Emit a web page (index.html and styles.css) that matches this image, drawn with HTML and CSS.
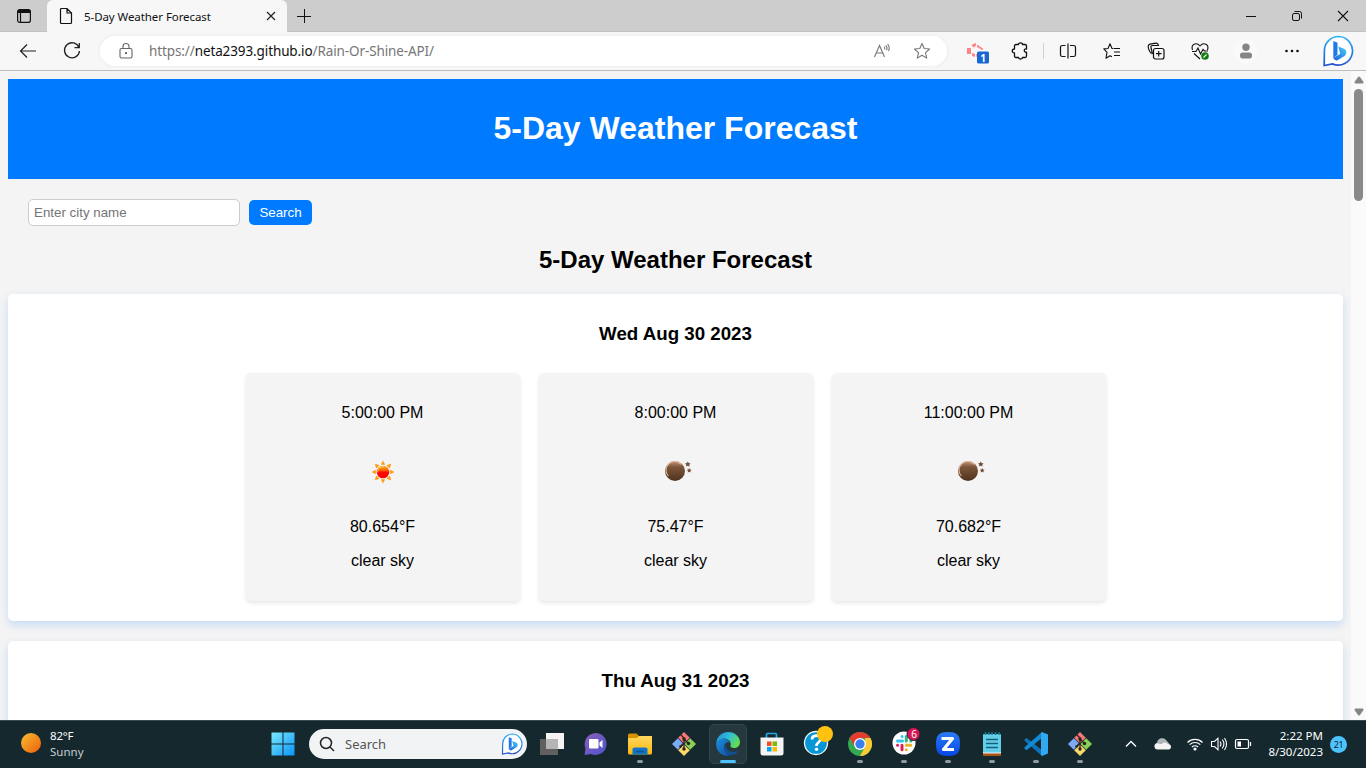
FILE: index.html
```html
<!DOCTYPE html>
<html lang="en">
<head>
<meta charset="utf-8">
<title>5-Day Weather Forecast</title>
<link rel="stylesheet" href="styles.css">
</head>
<body>
<svg class="defs" width="0" height="0" aria-hidden="true">
  <defs>
    <linearGradient id="bing" x1="0" y1="0" x2="0" y2="1"><stop offset="0" stop-color="#2fb4f5"/><stop offset="1" stop-color="#2552d0"/></linearGradient>
    <linearGradient id="bingb" x1="1" y1="0" x2="0" y2="1"><stop offset="0" stop-color="#48d3f5"/><stop offset="1" stop-color="#1b5be0"/></linearGradient>
    <linearGradient id="sunny" x1="0" y1="0" x2="1" y2="1"><stop offset="0" stop-color="#f5c031"/><stop offset="1" stop-color="#ee5d0c"/></linearGradient>
    <linearGradient id="win" x1="0" y1="0" x2="1" y2="1"><stop offset="0" stop-color="#7beafc"/><stop offset="1" stop-color="#0a93f8"/></linearGradient>
    <linearGradient id="redsun" x1="0" y1="0" x2="0" y2="1"><stop offset="0" stop-color="#ffb020"/><stop offset=".4" stop-color="#ff5a00"/><stop offset=".5" stop-color="#ff0800"/><stop offset="1" stop-color="#f00"/></linearGradient>
    <linearGradient id="moon" x1="0" y1="0" x2="0" y2="1"><stop offset="0" stop-color="#c79478"/><stop offset=".3" stop-color="#7d5539"/><stop offset="1" stop-color="#4f3320"/></linearGradient>
    <linearGradient id="folder" x1="0" y1="0" x2="0" y2="1"><stop offset="0" stop-color="#ffd75e"/><stop offset="1" stop-color="#fbb812"/></linearGradient>
    <linearGradient id="chat" x1="0" y1="0" x2="1" y2="1"><stop offset="0" stop-color="#8b5fb8"/><stop offset="1" stop-color="#4b55cf"/></linearGradient>
    <linearGradient id="edgeg" x1="0" y1="0" x2="1" y2=".5"><stop offset="0" stop-color="#1d87d8"/><stop offset=".55" stop-color="#2fc0d8"/><stop offset="1" stop-color="#62dc50"/></linearGradient>
    <linearGradient id="edgeb" x1="0" y1="0" x2="1" y2="1"><stop offset="0" stop-color="#1d8fe0"/><stop offset="1" stop-color="#0c4f9c"/></linearGradient>
    <linearGradient id="zoom" x1="0" y1="0" x2="0" y2="1"><stop offset="0" stop-color="#2b7bf7"/><stop offset="1" stop-color="#0646e8"/></linearGradient>
    <symbol id="bubble" viewBox="0 0 32 32">
      <path d="M16.500 1.500a14.300 14.300 0 1 1-6 27.400L2.200 30.500 2.400 16A14.200 14.200 0 0 1 16.500 1.500Z" fill="#fff" stroke="url(#bing)" stroke-width="1.700"/>
      <path d="M11.300 6l4.200 1.700v12l-4.200 3.500Z" fill="#1f78ec"/>
      <path d="M16.300 11.500l5.700 2.200c3.300 1.500 3 5.500.5 7.200L15.500 25.200q-2.500 1-4.200-2.200l7-4.200-1-3Z" fill="url(#bingb)"/>
    </symbol>
    <symbol id="git" viewBox="0 0 24 24">
      <path d="M12 0l5.800 5.800L12 11.600 6.200 5.800Z" fill="#f47878"/><path d="M5.800 6.200l5.800 5.800-5.800 5.800L0 12Z" fill="#7daaf5"/>
      <path d="M18.200 6.200L24 12l-5.800 5.800-5.800-5.800Z" fill="#89cf58"/><path d="M12 12.400l5.800 5.800L12 24l-5.800-5.800Z" fill="#fad86b"/>
      <path d="M8.500 2.500L12 6v11.500M12 7l5 5M12 11q-2 1-3.500 4" fill="none" stroke="#27221e" stroke-width="1.300"/>
      <circle cx="12" cy="7" r="1.700" fill="#27221e"/><circle cx="16.500" cy="11.500" r="1.700" fill="#27221e"/><circle cx="12" cy="17" r="1.700" fill="#27221e"/><circle cx="8.500" cy="14.500" r="1.300" fill="#27221e"/>
    </symbol>
    <symbol id="night" viewBox="0 0 28 24">
      <circle cx="11" cy="12" r="10" fill="url(#moon)"/>
      <path d="M4.300 17A8.500 8.500 0 0 1 17 5.300" fill="none" stroke="#e2b8a3" stroke-width="1.100"/>
      <path d="M23.800 2.500l.9 1.600 1.900.3-1.300 1.300.3 1.900-1.800-.8-1.800.8.300-1.900L21 4.400l1.900-.3ZM25.200 9l.8 1.500 1.600.3-1.200 1.100.3 1.600-1.500-.7-1.500.7.300-1.600-1.200-1.100 1.600-.3Z" fill="#755039"/>
    </symbol>
  </defs>
</svg>
<div class="desktop">
  <div class="tabstrip">
    <div class="tab-menu"><svg width="16" height="16" viewBox="0 0 16 16"><rect x="1.600" y="1.600" width="12.800" height="12.800" rx="2.200" fill="none" stroke="#111" stroke-width="1.200"/><path d="M1.500 5V4a2.500 2.500 0 0 1 2.500-2.500h8A2.500 2.500 0 0 1 14.500 4v1Z" fill="#111"/><path d="M4.500 5v9" stroke="#111" stroke-width="1.200"/></svg></div>
    <div class="tab">
      <svg width="14" height="18" viewBox="0 0 14 18" fill="none" stroke="#111" stroke-width="1.200"><path d="M1.500 2.500a1 1 0 0 1 1-1H8l4.500 4.500v9.500a1 1 0 0 1-1 1h-9a1 1 0 0 1-1-1ZM8 1.500V6h4.500"/></svg>
      <span class="tab-title">5-Day Weather Forecast</span>
      <svg class="tab-close" width="10" height="10" viewBox="0 0 10 10" stroke="#222" stroke-width="1.200"><path d="M1 1l8 8M9 1l-8 8"/></svg>
    </div>
    <svg class="new-tab" width="14" height="14" viewBox="0 0 14 14" stroke="#111" stroke-width="1"><path d="M7.500 0v14M0 7.500h14"/></svg>
    <div class="win-buttons">
      <svg width="12" height="12" viewBox="0 0 12 12"><path d="M1 6.500h10" stroke="#111"/></svg>
      <svg width="12" height="12" viewBox="0 0 12 12" fill="none" stroke="#111"><rect x="1.500" y="3.500" width="7" height="7" rx="1.500"/><path d="M3.500 1.500h5q2 0 2 2v5"/></svg>
      <svg width="12" height="12" viewBox="0 0 12 12" stroke="#111" stroke-width="1.100"><path d="M1 1l10 10M11 1L1 11"/></svg>
    </div>
  </div>

  <div class="toolbar">
    <div class="slot"><svg width="18" height="16" viewBox="0 0 18 16" fill="none" stroke="#222" stroke-width="1.200"><path d="M17 8H1.500M8 1.500L1.500 8 8 14.500"/></svg></div>
    <div class="slot"><svg width="18" height="18" viewBox="0 0 18 18" fill="none" stroke="#222" stroke-width="1.300"><path d="M16 5.500A7.500 7.500 0 1 0 16.500 9M16.300 1v4.700h-4.800"/></svg></div>
    <div class="address">
      <svg width="14" height="16" viewBox="0 0 14 16" fill="none" stroke="#666" stroke-width="1.100"><rect x="1" y="5.500" width="12" height="9.500" rx="1.500"/><path d="M4 5.500V3.500a3 3 0 0 1 6 0v2"/><circle cx="7" cy="10.200" r=".6" fill="#666"/></svg>
      <span class="url">https://<b>neta2393.github.io</b>/Rain-Or-Shine-API/</span>
      <svg class="read" width="18" height="18" viewBox="0 0 18 18" fill="none" stroke="#777" stroke-width="1.100"><path d="M1.500 15L6.500 3.500l5 11.500M3.200 11h6.600M11 4.500q1.200 1.300.6 3M12.800 3.300q2 2.200.8 5M14.600 2q2.700 3.200.9 7"/></svg>
      <svg width="18" height="18" viewBox="0 0 18 18" fill="none" stroke="#777" stroke-width="1.100" stroke-linejoin="round"><path d="M9 1.500l2.200 5 5.400.5-4.100 3.700 1.200 5.400L9 13.300l-4.700 2.800 1.200-5.400L1.400 7l5.400-.5Z"/></svg>
    </div>
    <div class="slot ext"><svg width="24" height="24" viewBox="0 0 24 24"><path d="M1 9h4v6H1ZM6 7V5.500L10 4v2.500L8 8.500ZM11 5.500l6.500 4.500-1.500 1-5-3ZM6 14l3 1v3l-3-1ZM10 15.500l3-1.500v3l-2.500 1Z" fill="#ff8585"/><rect x="11" y="12.500" width="12" height="12" rx="1.500" fill="#1967d2"/></svg><span class="ext-count">1</span></div>
    <div class="slot puzzle"><svg width="18" height="18" viewBox="0 0 18 18" fill="none" stroke="#111" stroke-width="1.300" stroke-linejoin="round"><path d="M5 2.500h2.500C7.500.3 11.500.3 11.500 2.500H14q1.500 0 1.500 1.500v3c-3-.8-3 3.800 0 3.200V14q0 1.500-1.500 1.500h-2.500c0 2-4 2-4 0H5Q3.500 15.500 3.500 14v-3C.5 11 .5 7 3.500 7V4Q3.500 2.500 5 2.500Z"/></svg></div>
    <div class="divider"></div>
    <div class="slot split"><svg width="18" height="18" viewBox="0 0 18 18" fill="none" stroke="#111" stroke-width="1.200"><path d="M6.500 3.500H3.500Q1.500 3.500 1.500 5v8q0 1.500 2 1.500h3M11 3.500h3.500q2 0 2 1.500v8q0 1.500-2 1.500H11M9 1.500v15"/></svg></div>
    <div class="slot"><svg width="18" height="18" viewBox="0 0 18 18" fill="none" stroke="#111" stroke-width="1.100" stroke-linejoin="round"><path d="M10.500 6.500H9L7 1.800 5 6.500l-4.200.4L4 10.300l-1 5.900 4-2.400 2 1M11 6.500h6M11 10h6M11 13.500h6"/></svg></div>
    <div class="slot"><svg width="18" height="18" viewBox="0 0 18 18" fill="none" stroke="#111" stroke-width="1.200"><path d="M4.500 11.500C1.800 9.500 1 5 1.300 4Q1.600 2.500 3 2.200l6-1q2-.2 2.500 2.300H5.500Q3.500 3.500 4 5.500L5.500 12"/><rect x="6.500" y="6.500" width="10.500" height="10.500" rx="2"/><path d="M11.700 9v5.500M9 11.700h5.500"/></svg></div>
    <div class="slot"><svg width="18" height="18" viewBox="0 0 18 18" fill="none" stroke="#111" stroke-width="1.100"><path d="M1.500 8C-.5 2.500 5.500-.3 9 4c3.500-4.300 9.500-1.500 7.500 4M1 9.500h4L7 6l2.500 6L12 7.500 13.500 9H17M3 11.500l6 5.500"/><circle cx="14" cy="14" r="3.800" fill="#107c10" stroke="none"/><path d="M12.500 15.500l3-3" stroke="#fff"/></svg></div>
    <div class="slot profile"><svg width="24" height="24" viewBox="0 0 24 24"><circle cx="12" cy="12" r="12" fill="#fafafa"/><circle cx="12" cy="8.200" r="3.700" fill="#858585"/><rect x="6" y="13.500" width="12" height="6" rx="2.800" fill="#858585"/></svg></div>
    <div class="slot"><svg width="16" height="4" viewBox="0 0 16 4" fill="#111"><circle cx="2.500" cy="2" r="1.300"/><circle cx="8" cy="2" r="1.300"/><circle cx="13.500" cy="2" r="1.300"/></svg></div>
    <div class="slot bing"><svg width="32" height="32"><use href="#bubble"/></svg></div>
  </div>

  <div class="viewport">
    <div class="page">
      <header class="banner"><h1>5-Day Weather Forecast</h1></header>
      <div class="search-form"><input type="text" placeholder="Enter city name"><button>Search</button></div>
      <h2>5-Day Weather Forecast</h2>
      <section class="day">
        <h3>Wed Aug 30 2023</h3>
        <div class="hours">
          <div class="hour"><p>5:00:00 PM</p>
            <svg class="weather" width="28" height="24" viewBox="0 0 28 24"><path d="M14 .500l2.200 4.300h-4.400ZM14 23.500l2.200-4.300h-4.400ZM2.500 12l4.300-2.200v4.400ZM25.500 12l-4.300-2.200v4.400ZM5.800 3.800l4.800 1.400-3.400 3.400ZM22.200 3.800l-1.400 4.800-3.400-3.400ZM5.800 20.200l1.400-4.800 3.400 3.400ZM22.200 20.200l-4.800-1.400 3.400-3.400Z" fill="#ff9a16"/><circle cx="14" cy="12" r="6.300" fill="url(#redsun)"/><path d="M8.800 12.500A5.200 5.200 0 0 1 15 6.800" fill="none" stroke="#ffd36a" stroke-width=".8"/></svg>
            <p class="temp">80.654°F</p><p class="sky">clear sky</p></div>
          <div class="hour"><p>8:00:00 PM</p>
            <svg class="weather night" width="28" height="24"><use href="#night"/></svg>
            <p class="temp">75.47°F</p><p class="sky">clear sky</p></div>
          <div class="hour"><p>11:00:00 PM</p>
            <svg class="weather night" width="28" height="24"><use href="#night"/></svg>
            <p class="temp">70.682°F</p><p class="sky">clear sky</p></div>
        </div>
      </section>
      <section class="day"><h3>Thu Aug 31 2023</h3></section>
    </div>
    <div class="scrollbar">
      <svg width="10" height="8" viewBox="0 0 10 8"><path d="M4 1Q5 0 6 1L9.500 6Q9.700 7.500 8.500 7.500h-7Q.3 7.500.5 6Z" fill="#858585"/></svg>
      <div class="thumb"></div>
      <svg class="down" width="10" height="8" viewBox="0 0 10 8"><path d="M4 7Q5 8 6 7L9.500 2Q9.700.5 8.500.5h-7Q.3.500.5 2Z" fill="#858585"/></svg>
    </div>
  </div>

  <div class="taskbar">
    <div class="widget"><svg width="20" height="20"><circle cx="10" cy="10" r="10" fill="url(#sunny)"/></svg><div><div class="deg">82°F</div><div class="cond">Sunny</div></div></div>
    <svg class="start" width="24" height="24" viewBox="0 0 24 24" fill="url(#win)"><path d="M.5.500h11v11H.5ZM12.500.500h11v11h-11ZM.5 12.500h11v11H.5ZM12.500 12.500h11v11h-11Z"/></svg>
    <div class="task-search">
      <svg width="16" height="16" viewBox="0 0 16 16" fill="none" stroke="#222" stroke-width="1.500"><circle cx="7" cy="7" r="5.500"/><path d="M11 11l4 4"/></svg>
      <span>Search</span>
      <svg width="22" height="22"><use href="#bubble"/></svg>
    </div>
    <div class="apps">
      <div class="app"><svg width="24" height="24" viewBox="0 0 24 24"><rect x="6" y="1" width="18" height="16" fill="#f4f4f4"/><rect y="7" width="18" height="16" fill="#606060"/><rect x="6" y="7" width="12" height="10" fill="#b5b5b5"/></svg></div>
      <div class="app"><svg width="24" height="24" viewBox="0 0 24 24"><path d="M11.500 1A11 11 0 1 1 7 22L.5 23l1-6.500A11.200 11.200 0 0 1 11.500 1Z" fill="url(#chat)"/><rect x="5" y="7" width="9.500" height="9.500" rx="1" fill="#fff"/><path d="M15.500 10.500l3-2.500v8l-3-2.500Z" fill="#fff"/></svg></div>
      <div class="app run"><svg width="26" height="24" viewBox="0 0 26 24"><path d="M1 3q0-1.500 1.500-1.500h7L12 4v4H1Z" fill="#d99100"/><path d="M1 6h9l2-2h13v17q0 1.500-1.500 1.500h-21Q1 22.500 1 21Z" fill="url(#folder)"/><path d="M5.500 22.500V17q0-1.500 2-1.500h11q2 0 2 1.500v5.500Z" fill="#1374c5"/><path d="M9 19.500h8" stroke="#0a579d" stroke-width="1.500"/></svg></div>
      <div class="app"><svg width="24" height="24"><use href="#git"/></svg></div>
      <div class="app active"><svg width="24" height="24" viewBox="0 0 24 24"><path d="M.3 11C.8 4.500 6 0 12 0c7 0 12 5 12 10 0 4-3 6-6 6-2.500 0-4-1-3.500-2.200C16 10 12 6 7.500 6.500 4 7 1.500 9 .3 11Z" fill="url(#edgeg)"/><path d="M.2 11C2 7.500 5 6.300 8 6.700c3.500.3 5.500 2.500 5.500 4C11 9 8 12 8.200 15.500c.3 4 3.500 7 6.500 8C7 25.500-.5 20 .2 11Z" fill="url(#edgeb)"/><path d="M9 11.500c-2.500 5 1.500 12 8 11.500 2.500-.5 5-2.800 6-4.500-7 3.500-13 .5-14-7Z" fill="#124f92"/></svg></div>
      <div class="app"><svg width="24" height="24" viewBox="0 0 24 24"><path d="M6.500 6V2.500q0-1 1-1h8q1 0 1 1V6" fill="none" stroke="#24a8e8" stroke-width="1.700"/><path d="M.5 5.500h23V21q0 2.500-2.500 2.500H3Q.5 23.500.5 21Z" fill="#f4f4f4"/><path d="M7 9.500h4.500V14H7Z" fill="#f25022"/><path d="M12.500 9.500H17V14h-4.500Z" fill="#7fba00"/><path d="M7 15h4.500v4.500H7Z" fill="#00a4ef"/><path d="M12.500 15H17v4.500h-4.500Z" fill="#ffb900"/></svg></div>
      <div class="app help"><svg width="32" height="32" viewBox="0 0 32 32"><circle cx="14" cy="17" r="11.500" fill="#0796d5" stroke="#e9f6fb" stroke-width="1.300"/><path d="M10 13.500c0-5 8.500-5 8.500-.5 0 3.500-4 3-4 7" fill="none" stroke="#fff" stroke-width="2.700"/><circle cx="14.500" cy="23.300" r="1.700" fill="#fff"/><circle cx="23" cy="8" r="8" fill="#ffc20e"/></svg></div>
      <div class="app run"><svg width="24" height="24" viewBox="0 0 24 24"><circle cx="12" cy="12" r="12" fill="#34a853"/><path d="M1.600 6A12 12 0 0 1 22.400 6H12L7 15Z" fill="#e33b2e"/><path d="M22.400 6A12 12 0 0 1 12 24l5-9 0-9Z" fill="#fcc934"/><circle cx="12" cy="12" r="6" fill="#fff"/><circle cx="12" cy="12" r="4.700" fill="#3a7ff0"/></svg></div>
      <div class="app run slack"><svg width="32" height="32" viewBox="0 0 32 32"><circle cx="15" cy="17" r="11.500" fill="#fff"/><g fill="none" stroke-width="3" stroke-linecap="round"><path d="M8.500 15h5M13 10.500h.1" stroke="#36c5f0"/><path d="M17.300 10.500V15M21.800 15h.1" stroke="#2eb67d"/><path d="M17.300 19.300h4.500M17.300 23.800h.1" stroke="#ecb22e"/><path d="M13 19.300v4.500M8.500 19.300h.1" stroke="#e01e5a"/></g><circle cx="24.500" cy="8" r="6.500" fill="#d91655" stroke="#26222c"/></svg><span class="count">6</span></div>
      <div class="app run"><svg width="24" height="24" viewBox="0 0 24 24"><path d="M12 0c9 0 12 3 12 12s-3 12-12 12S0 21 0 12 3 0 12 0Z" fill="url(#zoom)"/><path d="M5.500 6.500h11L7.500 17.500H18" fill="none" stroke="#fff" stroke-width="3.200" stroke-linejoin="round"/></svg></div>
      <div class="app run"><svg width="20" height="24" viewBox="0 0 20 24"><path d="M1 21h18v3H1Z" fill="#a85418"/><path d="M1 20h18v1.500H1Z" fill="#f5f1e8"/><rect x="1" y="2" width="18" height="18.500" rx="1" fill="#63cee9"/><path d="M3.500 0v3M7 0v3M10 0v3M13.500 0v3M17 0v3" stroke="#167994" stroke-width="1.500"/><path d="M4 7.500h12M4 11.500h12M4 15.500h12" stroke="#13627d" stroke-width="1.500"/></svg></div>
      <div class="app run"><svg width="24" height="24" viewBox="0 0 24 24"><path d="M.5 7.500l2-1.500L18 18v6L.5 8.800Z" fill="#0e72b8"/><path d="M.5 16.500l2 1.700L18 6V0L.5 15.200Z" fill="#118bd4"/><path d="M18 0l6 2.500v19L18 24l-1-1V1Z" fill="#31a8f0"/></svg></div>
      <div class="app run"><svg width="24" height="24"><use href="#git"/></svg></div>
    </div>
    <div class="tray">
      <div class="tray-slot chevron"><svg width="12" height="8" viewBox="0 0 12 8"><path d="M1 6.500l5-5 5 5" fill="none" stroke="#fff" stroke-width="1.300"/></svg></div>
      <div class="tray-slot cloud"><svg width="18" height="12" viewBox="0 0 18 12"><path d="M3 5a5.200 5.200 0 0 1 9.500-2.500l3 3.500Z" fill="#aeb6b9"/><path d="M3.500 11.500a3.300 3.300 0 0 1-.5-6.500l4 .5 4.500-1 3 1.500a2.800 2.800 0 0 1 .5 5.500Z" fill="#f4f4f4"/></svg></div>
      <div class="tray-slot"><svg width="18" height="14" viewBox="0 0 18 14" fill="none" stroke="#fff" stroke-width="1.200"><path d="M1.500 5.500a10.600 10.600 0 0 1 15 0M3.700 7.700a7.500 7.500 0 0 1 10.600 0M6 10a4.200 4.200 0 0 1 6 0"/><circle cx="9" cy="12" r="1" fill="#fff"/></svg></div>
      <div class="tray-slot"><svg width="18" height="16" viewBox="0 0 18 16" fill="none" stroke="#fff" stroke-width="1.100"><path d="M1.500 5.500h3L8 2.200v11.600L4.500 10.500h-3ZM10 5.500q2 2.500 0 5M12.300 3.500q3.200 4.500 0 9M14.500 2q4 6 0 12"/></svg></div>
      <div class="tray-slot"><svg width="18" height="12" viewBox="0 0 18 12" fill="none" stroke="#fff" stroke-width="1.200"><rect x="1.500" y="1.500" width="13" height="9" rx="1.500"/><path d="M16.500 4v4"/><path d="M3.500 3.500h3.500v5H3.500Z" fill="#fff" stroke="none"/></svg></div>
      <div class="clock"><div class="time">2:22 PM</div><div class="date">8/30/2023</div></div>
      <div class="notif">21</div>
    </div>
  </div>
</div>
</body>
</html>
```
FILE: styles.css
```css
* { box-sizing: border-box; }
body { margin: 0; overflow: hidden; font-family: "Noto Sans", sans-serif; }
svg { display: block; flex: none; overflow: visible; }
.defs { position: absolute; }
.desktop { display: flex; flex-direction: column; width: 1366px; height: 768px; overflow: hidden; }

.tabstrip { display: flex; height: 32px; flex: none; background: #cdcdcd; align-items: center; border-bottom: 1px solid #c2c2c2; }
.tab-menu { width: 47px; display: flex; padding-left: 16px; }
.tab { display: flex; align-items: center; align-self: stretch; width: 240px; height: 32px; background: #f7f7f7; border-radius: 6px 6px 0 0; padding: 0 11px 0 12px; }
.tab-title { margin-left: 11px; font-size: 11.5px; letter-spacing: -0.07px; white-space: nowrap; color: #111; }
.tab-close { margin-left: auto; }
.new-tab { margin-left: 10px; }
.win-buttons { margin-left: auto; display: flex; gap: 34px; padding-right: 17px; }

.toolbar { display: flex; align-items: center; height: 39px; flex: none; background: #f7f7f7; border-bottom: 1px solid #bdbdbd; padding-left: 6px; }
.slot { width: 44px; flex: none; display: flex; justify-content: center; }
.address { display: flex; align-items: center; width: 847px; height: 30px; margin: 0 9px 0 6px; border-radius: 15px; background: #fff; box-shadow: 0 0 4px rgba(0, 0, 0, 0.06); padding: 0 16px 0 19px; }
.url { margin-left: 16px; font-size: 13.5px; letter-spacing: -0.11px; color: #767676; white-space: nowrap; }
.url b { font-weight: 400; color: #111; }
.read { margin-left: auto; margin-right: 22px; }
.ext { position: relative; }
.ext-count { position: absolute; left: 21px; top: 13px; width: 12px; line-height: 12px; text-align: center; font-size: 10px; font-weight: 700; color: #fff; }
.puzzle { width: 40px; }
.divider { width: 1px; height: 16px; background: #d0d0d0; margin: 0 3px; }
.split { width: 41px; margin-right: 2px; }
.profile { width: 48px; }
.bing { width: 48px; margin-right: 2px; }

.viewport { display: flex; height: 649px; flex: none; background: #f4f4f4; overflow: hidden; }
.page { width: 1351px; padding: 8px; overflow: hidden; font-family: "Liberation Sans", Arial, sans-serif; color: #000; }
.banner { height: 100px; padding-top: 31px; background: #007bff; color: #fff; text-align: center; }
.banner h1 { margin: 0; font-size: 32px; line-height: 37px; }
.search-form { display: flex; align-items: center; gap: 9px; padding: 20px 20px 0; }
.search-form input { width: 212px; height: 27px; padding: 5px; border: 1px solid #ccc; border-radius: 5px; font: 13.333px "Liberation Sans", Arial, sans-serif; }
.search-form input::placeholder { color: #757575; }
.search-form button { width: 63px; height: 25px; padding: 0; border: 0; border-radius: 5px; background: #007bff; color: #fff; font: 13.333px "Liberation Sans", Arial, sans-serif; }
.page h2 { margin: 20px 0; font-size: 24px; line-height: 28px; text-align: center; }
.day { height: 327px; margin-bottom: 20px; padding-top: 29px; border-radius: 5px; background: #fff; box-shadow: 0 4px 10px rgba(0, 115, 245, 0.19); text-align: center; }
.day h3 { margin: 0 0 29px; font-size: 18.72px; line-height: 21px; }
.hours { display: flex; justify-content: center; gap: 19px; }
.hour { width: 274px; height: 228px; padding-top: 31px; border-radius: 5px; background: #f4f4f4; box-shadow: 0 2px 4px rgba(0, 0, 0, 0.1); font-size: 16px; line-height: 18px; }
.hour p { margin: 0; }
.weather { margin: 38px auto 0; }
.weather.night { margin-top: 37px; transform: translateX(2px); }
.hour .temp { margin-top: 34px; }
.hour .night + .temp { margin-top: 35px; }
.hour .sky { margin-top: 16px; }
.scrollbar { display: flex; flex-direction: column; align-items: center; width: 15px; background: #fafafa; padding: 5px 0 4px; }
.thumb { width: 9px; height: 112px; margin-top: 5px; border-radius: 5px; background: #8a8a8a; }
.down { margin-top: auto; }

.taskbar { display: flex; align-items: center; height: 48px; flex: none; background: #14282e; border-top: 1px solid #3b4b50; padding-bottom: 1px; color: #fff; font-size: 11.5px; }
.widget { display: flex; align-items: center; width: 271px; padding-left: 21px; gap: 9px; line-height: 16px; }
.widget > svg { margin-bottom: 2px; }
.deg { letter-spacing: -0.2px; }
.cond { color: #c8ced0; }
.task-search { display: flex; align-items: center; width: 218px; height: 30px; margin: 0 3px 0 14px; padding: 0 4px 0 10px; border-radius: 15px; background: #f1f3f4; color: #555; font-size: 13px; }
.task-search span { margin: 0 auto 0 10px; }
.apps { display: flex; height: 46px; }
.app { position: relative; width: 44px; display: flex; align-items: center; justify-content: center; }
.app.run::after, .app.active::after { content: ""; position: absolute; left: 19px; bottom: 4px; width: 6px; height: 3px; border-radius: 2px; background: #919b9e; }
.app.active { background: #25383e; border: 1px solid #33464b; border-radius: 5px; width: 38px; height: 40px; margin: 3px 3px 0; }
.app.active::after { left: 10px; bottom: 0; width: 16px; background: #4cc2ff; }
.help svg, .slack svg { margin-top: -4px; }
.help svg { margin-left: 4px; }
.slack svg { margin-left: 2px; }
.count { position: absolute; left: 25px; top: 6px; width: 14px; line-height: 14px; text-align: center; font-size: 10px; }
.tray { display: flex; align-items: center; margin-left: auto; padding-right: 19px; }
.tray-slot { display: flex; justify-content: center; width: 24px; }
.chevron { width: 32px; }
.cloud { width: 32px; margin-right: 4px; }
.clock { width: 68px; text-align: right; line-height: 16px; white-space: nowrap; }
.notif { width: 17px; height: 17px; margin-left: 7px; border-radius: 50%; background: #4cc2ff; color: #10262e; font-size: 9px; line-height: 17px; text-align: center; letter-spacing: -0.3px; }
```
